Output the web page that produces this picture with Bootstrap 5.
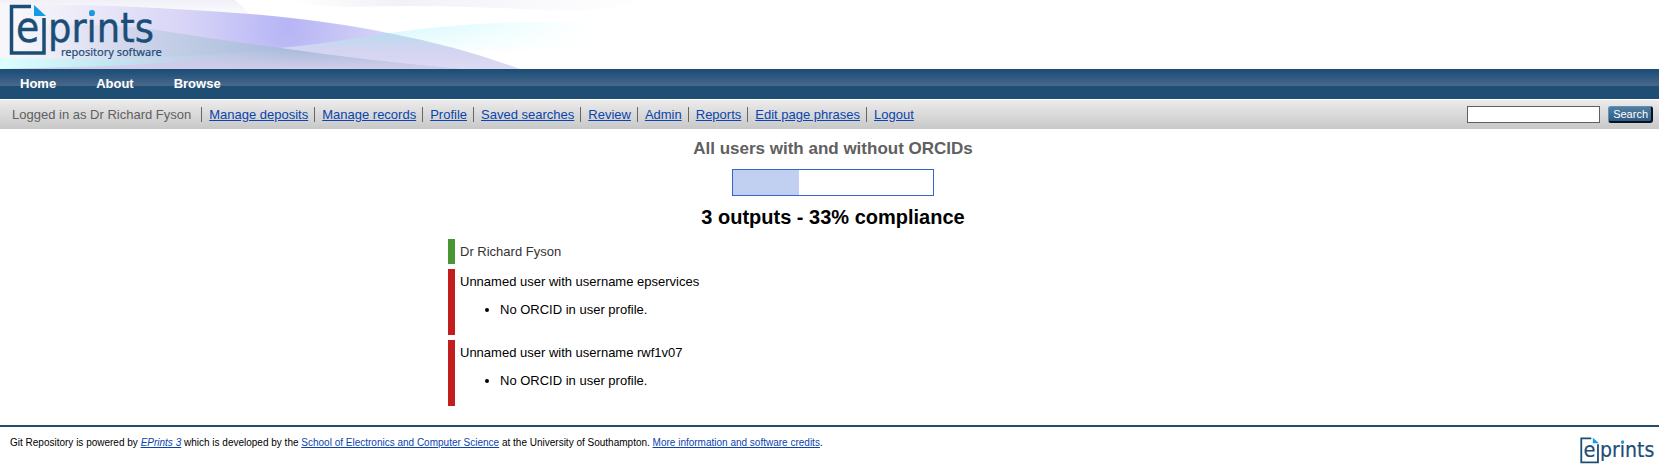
<!DOCTYPE html>
<html lang="en">
<head>
<meta charset="utf-8">
<meta name="viewport" content="width=device-width, initial-scale=1">
<title>All users with and without ORCIDs - Git Repository</title>
<link rel="stylesheet" href="https://cdn.jsdelivr.net/npm/bootstrap@5.3.0/dist/css/bootstrap.min.css">
<style>
body { font-family: "Liberation Sans", Arial, sans-serif; font-size: 13px; line-height: 15px; color: #000; background: #fff; }
a { color: #0a44ae; text-decoration: underline; }
.masthead > svg { display: block; overflow: visible; }
.brand-text { font-family: "DejaVu Sans Condensed", "Noto Sans", sans-serif; fill: #1b4e77; }
.main-menu { background: linear-gradient(#1f4d73 0, #20507a 10%, #49688a 56%, #1f4e75 57%, #1f4e75 100%); height: 30px; }
.main-menu .nav-link { color: #fff; font-weight: bold; padding: 0 20px; line-height: 30px; }
.tool-bar { background: linear-gradient(#ebebeb, #c8c8c8); border-top: 1px solid #fff; min-height: 30px; color: #606060; padding: 0 6px 0 12px; }
.tool-bar .whoami { margin-right: 10px; }
.tool-bar li { padding: 0 6px 0 7px; border-left: 1px solid #666; }
.tool-bar .search-box { width: 133px; height: 17px; border: 1px solid #606060; border-radius: 0; padding: 0 2px; font-size: 11px; }
.tool-bar .search-btn { height: 17px; padding: 0 3px 0 4px; font-size: 11px; line-height: 13px; color: #fff; border: 2px solid; border-width: 1px 2px 2px 1px; border-color: #5b90ba #08131d #08131d #5b90ba; border-radius: 3px; background: linear-gradient(#557e9f, #2c5c87); }
.report { max-width: 777px; padding-left: 7px; }
.page-title { font-size: 17px; line-height: 20px; font-weight: bold; color: #606060; margin: 10px 0; }
.meter { width: 202px; height: 27px; border: 1px solid #3366cc; border-radius: 0; background: #fff; }
.meter .progress-bar { background: #c1cff0; }
.summary { font-size: 20px; line-height: 24px; font-weight: bold; margin: 9px 0 10px; }
.entry { border-left: 7px solid #c21e1e; padding: 5px; margin-bottom: 5px; }
.entry.ok { border-color: #499732; color: #333; }
.entry ul { padding-left: 40px; margin: 13px 0; }
.page-foot { border-top: 2px solid #1f4e75; margin-top: 19px; padding: 10px 4px 4px 10px; font-size: 10px; line-height: 12px; }
</style>
</head>
<body>
<header>
  <div class="masthead">
    <svg width="680" height="69" viewBox="0 0 680 69" role="img" aria-label="EPrints repository software">
      <defs>
        <linearGradient id="corner" x1="0" y1="0" x2="0" y2="1"><stop offset="0" stop-color="#f1f0f7"/><stop offset="1" stop-color="#fcfcfe"/></linearGradient>
        <radialGradient id="violet" gradientUnits="userSpaceOnUse" cx="288" cy="27" r="270"><stop offset="0" stop-color="#b6b4f5"/><stop offset=".35" stop-color="#d5d2f7"/><stop offset=".8" stop-color="#eeecf8"/><stop offset="1" stop-color="#f7f6fb"/></radialGradient>
        <linearGradient id="steel" x1="0" y1="0" x2="1" y2="0"><stop offset="0" stop-color="#f3f3fa" stop-opacity="0"/><stop offset=".3" stop-color="#ccd3ea"/><stop offset=".65" stop-color="#a3b9d9"/><stop offset="1" stop-color="#b4c4e2"/></linearGradient>
        <linearGradient id="base" gradientUnits="userSpaceOnUse" x1="0" y1="48" x2="0" y2="69"><stop offset="0" stop-color="#d0cdea" stop-opacity="0"/><stop offset="1" stop-color="#d0cdea"/></linearGradient>
        <linearGradient id="cyan" x1="0" y1="0" x2="1" y2="0"><stop offset="0" stop-color="#a8dcea"/><stop offset=".4" stop-color="#d3f8fc"/><stop offset=".7" stop-color="#eafdfe"/><stop offset="1" stop-color="#fff"/></linearGradient>
        <linearGradient id="fade" x1="0" y1="0" x2="0" y2="1"><stop offset="0" stop-color="#fff" stop-opacity="0"/><stop offset="1" stop-color="#fff"/></linearGradient>
        <linearGradient id="lilac" x1="0" y1="0" x2="0" y2="1"><stop offset="0" stop-color="#b9dcee"/><stop offset=".5" stop-color="#d4d4f1"/><stop offset="1" stop-color="#dddaf3"/></linearGradient>
        <linearGradient id="pool" x1="0" y1="0" x2="1" y2="0"><stop offset="0" stop-color="#dcfffe"/><stop offset=".35" stop-color="#c4e9f3"/><stop offset="1" stop-color="#b3c3e0" stop-opacity="0"/></linearGradient>
        <linearGradient id="topstrip" x1="0" y1="0" x2="1" y2="0"><stop offset="0" stop-color="#fff"/><stop offset=".3" stop-color="#f2f1f7"/><stop offset="1" stop-color="#fff"/></linearGradient>
      </defs>
      <path d="M0 0H235Q243 6 250 15Q120 3 0 4Z" fill="url(#corner)"/>
      <path d="M290 0H645Q600 15 520 9Q430 4 350 7Q310 6 290 0Z" fill="url(#topstrip)"/>
      <path d="M280 48Q350 39 390 33Q480 20 590 22L590 45Q440 58 280 48Z" fill="url(#cyan)"/>
      <path d="M280 20H600V60H280Z" fill="url(#fade)"/>
      <path d="M0 4Q110 3 250 14Q330 21 388 33Q460 47 520 69H0Z" fill="url(#violet)"/>
      <path d="M280 48Q340 42 388 33Q460 47 520 69H455Q360 64 280 48Z" fill="url(#lilac)"/>
      <path d="M0 30Q80 20 150 29Q220 40 280 48Q370 61 460 69H0Z" fill="url(#steel)"/>
      <path d="M0 59Q150 65 280 48Q370 61 460 69H0Z" fill="url(#base)"/>
      <path d="M0 58Q150 62 280 48Q190 63 110 66L0 69Z" fill="url(#pool)"/>
      <g id="mark-shape">
        <path d="M31 6.500H11.500V53H44V18" fill="none" stroke="#1b4e77" stroke-width="3.500"/>
        <path d="M34 5V16H46Z" fill="#159ce4"/>
        <text class="brand-text" x="16" y="42" font-size="42" stroke="#1b4e77" stroke-width=".4">e</text>
        <text class="brand-text" x="48" y="42" font-size="41" stroke="#1b4e77" stroke-width=".4">prints</text>
        <circle cx="92" cy="13" r="3" fill="#159ce4"/>
      </g>
      <text x="61" y="56" font-family="Noto Sans, sans-serif" font-size="11" fill="#1b4e77" stroke="#1b4e77" stroke-width=".2">repository software</text>
    </svg>
  </div>
  <nav class="main-menu nav" aria-label="Main">
    <a class="nav-link text-decoration-none" href="#">Home</a>
    <a class="nav-link text-decoration-none" href="#">About</a>
    <a class="nav-link text-decoration-none" href="#">Browse</a>
  </nav>
  <div class="tool-bar d-flex flex-wrap align-items-center justify-content-between">
    <div class="d-flex flex-wrap align-items-center">
      <span class="whoami">Logged in as Dr Richard Fyson</span>
      <ul class="list-unstyled d-flex flex-wrap m-0">
        <li><a href="#">Manage deposits</a></li>
        <li><a href="#">Manage records</a></li>
        <li><a href="#">Profile</a></li>
        <li><a href="#">Saved searches</a></li>
        <li><a href="#">Review</a></li>
        <li><a href="#">Admin</a></li>
        <li><a href="#">Reports</a></li>
        <li><a href="#">Edit page phrases</a></li>
        <li><a href="#">Logout</a></li>
      </ul>
    </div>
    <form class="d-flex align-items-center gap-2">
      <input class="search-box" type="text" aria-label="Search the repository">
      <button class="search-btn" type="button">Search</button>
    </form>
  </div>
</header>
<main class="report mx-auto">
  <h1 class="page-title text-center">All users with and without ORCIDs</h1>
  <div class="progress meter mx-auto" role="progressbar" aria-label="Compliance" aria-valuenow="33" aria-valuemin="0" aria-valuemax="100">
    <div class="progress-bar" style="width: 33%"></div>
  </div>
  <h2 class="summary text-center">3 outputs - 33% compliance</h2>
  <div class="entry ok">Dr Richard Fyson</div>
  <div class="entry">Unnamed user with username epservices
    <ul><li>No ORCID in user profile.</li></ul>
  </div>
  <div class="entry">Unnamed user with username rwf1v07
    <ul><li>No ORCID in user profile.</li></ul>
  </div>
</main>
<footer class="page-foot d-flex justify-content-between align-items-start">
  <div>Git Repository is powered by <em><a href="#">EPrints 3</a></em> which is developed by the <a href="#">School of Electronics and Computer Science</a> at the University of Southampton. <a href="#">More information and software credits</a>.</div>
  <a href="#" aria-label="EPrints">
    <svg class="d-block overflow-visible" width="75" height="28" viewBox="9 4 146 54" aria-hidden="true"><use href="#mark-shape"/></svg>
  </a>
</footer>
<script src="https://cdn.jsdelivr.net/npm/bootstrap@5.3.0/dist/js/bootstrap.bundle.min.js"></script>
</body>
</html>
